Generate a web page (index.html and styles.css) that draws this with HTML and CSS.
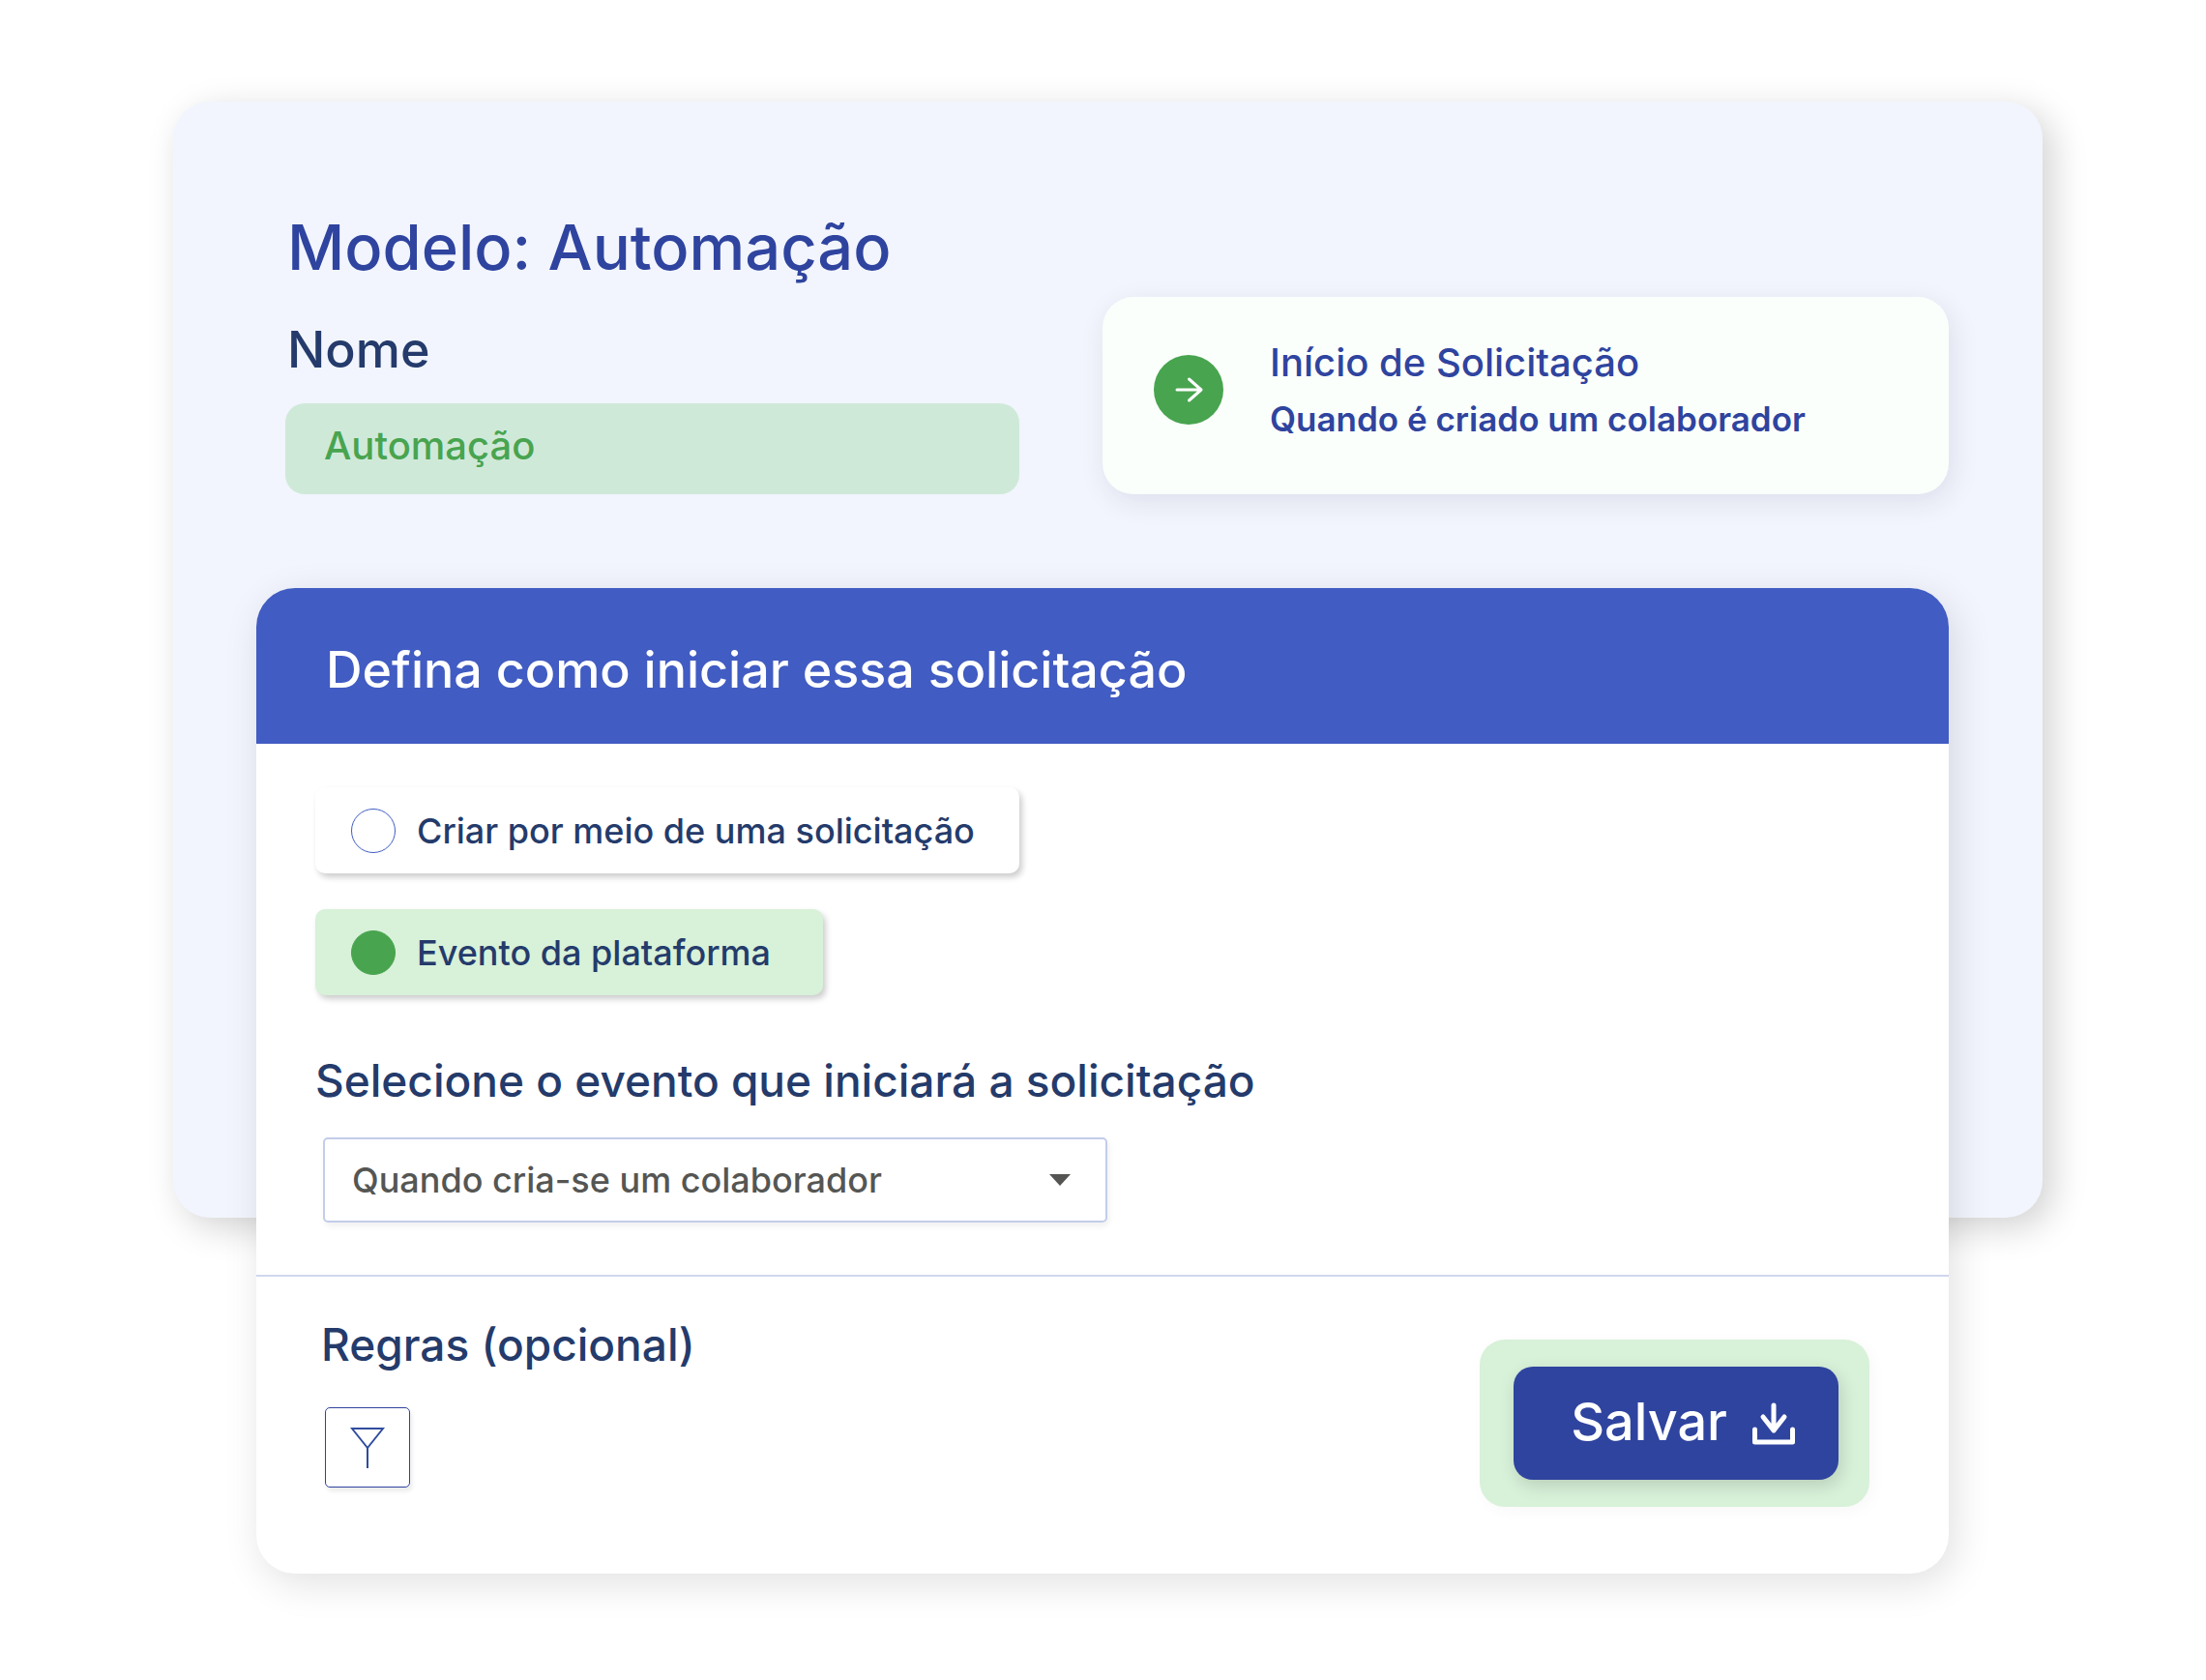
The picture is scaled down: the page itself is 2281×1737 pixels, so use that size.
FILE: index.html
```
<!DOCTYPE html>
<html lang="pt-BR">

<head>
    <meta charset="UTF-8">
    <meta name="viewport" content="width=device-width, initial-scale=1.0">
    <title>Modelo: Automação</title>
    <link rel="stylesheet" href="styles.css">
</head>

<body>
    <main class="panel">
        <div class="top">
            <div class="model">
                <h1>Modelo: Automação</h1>
                <label for="name">Nome</label>
                <input type="text" id="name" class="name-input" value="Automação">
            </div>
            <div class="start">
                <svg class="start-icon" viewBox="0 0 72 72" aria-hidden="true">
                    <circle cx="36" cy="36" r="36" />
                    <path d="M24 36h25M36.500 25l12.500 11l-12.500 11" />
                </svg>
                <div class="start-text">
                    <h2>Início de Solicitação</h2>
                    <p>Quando é criado um colaborador</p>
                </div>
            </div>
        </div>

        <form class="card">
            <h2 class="card-header">Defina como iniciar essa solicitação</h2>

            <div class="card-body">
                <label class="option">
                    <input type="radio" name="start">
                    Criar por meio de uma solicitação
                </label>
                <label class="option selected">
                    <input type="radio" name="start" checked>
                    Evento da plataforma
                </label>

                <label class="label" for="event">Selecione o evento que iniciará a solicitação</label>
                <div class="select">
                    <select id="event">
                        <option>Quando cria-se um colaborador</option>
                    </select>
                    <svg class="caret" viewBox="0 0 22 12" aria-hidden="true">
                        <path d="M0 0h22L11 12z" />
                    </svg>
                </div>
            </div>

            <div class="card-footer">
                <div class="rules">
                    <h3 class="label">Regras (opcional)</h3>
                    <button type="button" class="filter" aria-label="Adicionar regra">
                        <svg viewBox="0 0 36 44" aria-hidden="true">
                            <path d="M2 2h32L18 22zM18 22v21" />
                        </svg>
                    </button>
                </div>
                <div class="save-box">
                    <button type="button" class="save">
                        Salvar
                        <svg viewBox="0 0 44 44" aria-hidden="true">
                            <path d="M22 3v26M11 15l11 14l11-14" />
                            <path d="M2.500 28v13h39v-13" />
                        </svg>
                    </button>
                </div>
            </div>
        </form>
    </main>
</body>

</html>
```
FILE: styles.css
```
* {
    box-sizing: border-box;
}

body {
    min-height: 100vh;
    margin: 0;
    padding: 105px 169px 478px 179px;
    background-color: #fff;
    font-family: Inter, sans-serif;
    font-weight: 500;
    color: #243b6b;
}

h1,
h2,
h3,
p {
    margin: 0;
    font-weight: 500;
}

input,
select,
button {
    font: inherit;
    margin: 0;
}

.panel {
    display: flex;
    flex-direction: column;
    gap: 97px;
    padding: 111px 97px 0 86px;
    border-radius: 38px;
    background-color: #f2f5fd;
    box-shadow: 10px 10px 36px rgba(0, 0, 0, 0.18);
}

.top {
    display: grid;
    grid-template-columns: 759fr 875fr;
    align-items: end;
    gap: 86px;
    padding-left: 30px;
}

.model {
    display: flex;
    flex-direction: column;
}

.model h1 {
    margin-bottom: 34px;
    padding-left: 2px;
    font-size: 65px;
    line-height: 80px;
    color: #2f449f;
}

.model label {
    margin-bottom: 23px;
    padding-left: 2px;
    font-size: 52px;
    line-height: 64px;
}

.name-input {
    width: 100%;
    height: 94px;
    padding: 0 40px 8px;
    border: none;
    border-radius: 20px;
    background-color: #cfe9d9;
    color: #48a44f;
    font-size: 40px;
}

.start {
    display: flex;
    align-items: center;
    gap: 48px;
    height: 204px;
    padding: 0 53px 12px;
    border-radius: 32px;
    background-color: #fafffb;
    box-shadow: 4px 8px 28px rgba(47, 40, 80, 0.1);
    color: #2f449f;
}

.start-icon {
    flex: none;
    width: 72px;
}

.start-icon circle {
    fill: #48a44f;
}

.start-icon path {
    fill: none;
    stroke: #fff;
    stroke-width: 3;
    stroke-linecap: round;
    stroke-linejoin: round;
}

.start-text h2 {
    font-size: 40px;
    line-height: 60px;
}

.start-text p {
    font-size: 35px;
    line-height: 56px;
    font-weight: 600;
}

/* card hangs out of the bottom of the panel */
.card {
    margin-bottom: -368px;
    border-radius: 40px;
    background-color: #fff;
    box-shadow: 6px 10px 40px rgba(0, 0, 0, 0.12);
}

.card-header {
    padding: 53px 72px 44px;
    border-radius: 40px 40px 0 0;
    background-color: #415cc2;
    color: #fff;
    font-size: 52px;
    line-height: 64px;
}

.card-body {
    display: flex;
    flex-direction: column;
    align-items: flex-start;
    padding: 45px 67px 54px 61px;
    border-bottom: 2px solid #cfd7ee;
}

.option {
    display: flex;
    align-items: center;
    gap: 22px;
    height: 89px;
    margin-bottom: 37px;
    padding: 0 46px 0 37px;
    border-radius: 10px;
    background-color: #fff;
    box-shadow: 3px 4px 6px rgba(0, 0, 0, 0.2);
    font-size: 36px;
}

.option input {
    appearance: none;
    width: 46px;
    height: 46px;
    border: 1px solid #415cc2;
    border-radius: 50%;
}

.option.selected {
    margin-bottom: 58px;
    padding-right: 54px;
    background-color: #d8f1d9;
}

.option input:checked {
    border-color: #48a44f;
    background-color: #48a44f;
}

.label {
    font-size: 46px;
    line-height: 60px;
}

.select {
    display: flex;
    align-items: center;
    width: 50%;
    margin: 29px 0 0 8px;
    padding-right: 36px;
    border: 2px solid #c3cdea;
    border-radius: 5px;
    box-shadow: 2px 4px 6px rgba(0, 0, 0, 0.06);
}

.select select {
    appearance: none;
    flex: 1;
    height: 84px;
    padding: 0 28px;
    border: none;
    background: none;
    color: #555653;
    font-size: 36px;
}

.caret {
    width: 22px;
    fill: #555653;
}

.card-footer {
    display: flex;
    justify-content: space-between;
    align-items: flex-start;
    padding: 40px 82px 69px 67px;
}

.save-box {
    margin-top: 25px;
    padding: 28px 32px 28px 35px;
    border-radius: 26px;
    background-color: #d8f1d9;
    box-shadow: 4px 4px 16px rgba(0, 0, 0, 0.03);
}

.filter {
    display: flex;
    align-items: center;
    justify-content: center;
    width: 88px;
    height: 83px;
    margin: 35px 0 0 4px;
    padding: 0;
    border: 1px solid #2f449f;
    border-radius: 5px;
    background-color: #fff;
    box-shadow: 2px 4px 4px rgba(0, 0, 0, 0.08);
}

.filter svg {
    width: 36px;
    fill: none;
    stroke: #2f4c9f;
    stroke-width: 2;
}

.save {
    display: flex;
    align-items: center;
    gap: 26px;
    height: 117px;
    padding: 0 45px 4px 59px;
    border: none;
    border-radius: 20px;
    background-color: #2f449f;
    box-shadow: 3px 6px 18px rgba(0, 0, 0, 0.15);
    color: #fff;
    font-size: 54px;
}

.save svg {
    width: 44px;
    margin-top: 4px;
    fill: none;
    stroke: #fff;
    stroke-width: 5;
    stroke-linecap: round;
    stroke-linejoin: round;
}
```
